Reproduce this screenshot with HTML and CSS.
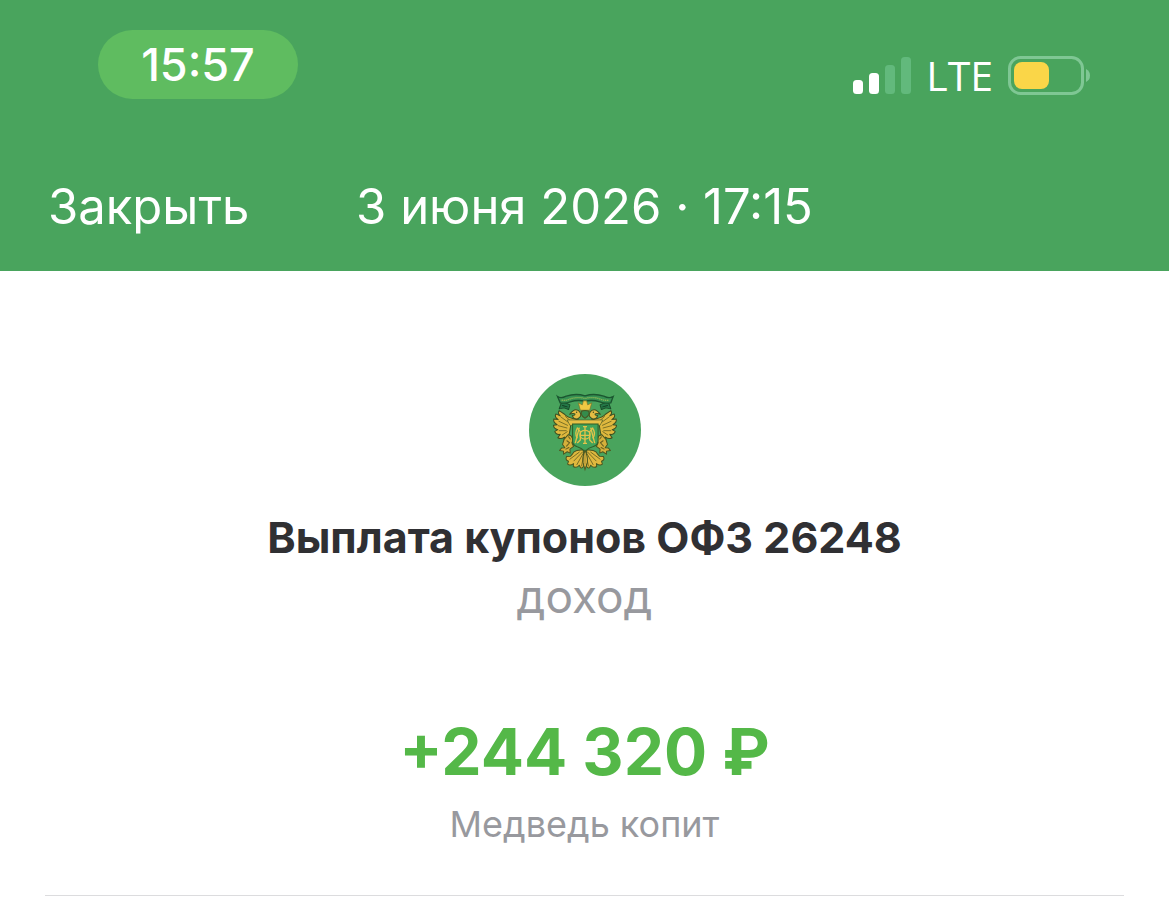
FILE: index.html
```html
<!DOCTYPE html>
<html lang="ru">
<head>
<meta charset="utf-8">
<meta name="viewport" content="width=device-width, initial-scale=1">
<title>Выплата купонов ОФЗ 26248</title>
<link rel="stylesheet" href="styles.css">
</head>
<body>
<header class="header">
  <div class="status">
    <time class="clock">15:57</time>
    <div class="indicators">
      <svg class="signal" viewBox="0 0 60 40" aria-hidden="true">
        <rect x="1" y="25" width="10" height="14" rx="3.5" fill="#fff"/>
        <rect x="17" y="18" width="10" height="21" rx="3.5" fill="#fff"/>
        <rect x="33" y="10" width="10" height="29" rx="3.5" fill="#62b97c"/>
        <rect x="49" y="2" width="10" height="37" rx="3.5" fill="#62b97c"/>
      </svg>
      <span class="network">LTE</span>
      <svg class="battery" viewBox="0 0 84 40" aria-hidden="true">
        <rect x="2.5" y="2.5" width="73" height="36" rx="11" fill="none" stroke="#7fc794" stroke-width="3"/>
        <rect x="7" y="7" width="35" height="27" rx="8" fill="#fad648"/>
        <path d="M79 14Q83 16 83 20.5T79 27Z" fill="#7fc794"/>
      </svg>
    </div>
  </div>
  <nav class="nav">
    <button class="close" type="button">Закрыть</button>
    <time class="date" datetime="2026-06-03T17:15">3 июня 2026 · 17:15</time>
  </nav>
</header>
<main class="operation">
  <svg class="emblem" viewBox="28 27 334 334" role="img" aria-label="Герб">
    <defs>
      <g id="side" stroke-linejoin="round" stroke-linecap="round">
        <path d="M181 167C166 158 146 162 134 147L118 136Q112 144 121 152L108 146Q103 154 115 163L102 161Q99 171 112 178L101 180Q101 190 114 193L105 198Q108 209 121 207L114 217Q123 223 134 215L132 227L143 221L149 201L153 176L181 177Z" fill="#dfb83e" stroke="#3d4e20" stroke-width="3"/>
        <path d="M123 155L145 171M117 168L143 180M115 181L141 188M118 196L139 196M127 209L142 199M137 154L153 168" fill="none" stroke="#6b6420" stroke-width="2.5"/>
        <path d="M160 157Q170 165 178 157Q186 151 180 141Q175 132 164 134Q156 138 149 147Q160 143 165 146Q166 151 157 151Z" fill="#e3bc43" stroke="#3d4e20" stroke-width="3"/>
        <circle cx="170" cy="141" r="2" fill="#374b20"/>
        <path d="M145 208L133 221L128 237L135 247L125 248L119 255L131 257L131 266L142 259L151 263L150 251L161 243L156 232L160 222L153 211Z" fill="#d4b03b" stroke="#4a5620" stroke-width="3"/>
        <path d="M141 226L149 232L140 242M151 221L146 214M147 246L138 251" fill="none" stroke="#665f20" stroke-width="3"/>
        <path d="M190 254C178 252 161 256 158 265L152 272L140 273Q135 284 146 287L143 296Q151 302 161 294L160 303Q170 309 178 299L182 307Q188 309 191 300Z" fill="#dfb83e" stroke="#4a5620" stroke-width="3"/>
        <path d="M187 260L162 286M189 265L171 297M191 269L185 301M178 260L150 281" fill="none" stroke="#645e20" stroke-width="2.5"/>
        <path d="M115 96L124 114L118 131L133 128L146 133L150 119L137 113" fill="#247847" stroke="#194c29" stroke-width="3"/>
        <path d="M128 121L142 125" stroke="#123f22" stroke-width="3"/>
      </g>
    </defs>
    <circle cx="195" cy="194" r="167" fill="#49a45d"/>
    <use href="#side"/>
    <use href="#side" transform="translate(390 0) scale(-1 1)"/>
    <path d="M113 94Q123 101 139 93Q167 84 195 92Q223 84 251 93Q267 101 279 94L272 113Q253 116 239 110Q217 103 195 108Q173 103 151 110Q137 116 121 113Z" fill="#369052" stroke="#1b5630" stroke-width="4"/>
    <path d="M125 105Q140 107 151 101Q174 94 195 100Q217 94 239 101Q252 107 267 105" fill="none" stroke="#8cb655" stroke-width="4" stroke-dasharray="4 2"/>
    <path d="M181 135L175 113L187 119L190 107H200L203 119L215 113L209 135Z" fill="#f0c943" stroke="#75702a" stroke-width="2"/>
    <path d="M184 138Q195 133 207 138V147Q203 155 195 159Q187 155 184 147Z" fill="#348c4c" stroke="#4a5620" stroke-width="3"/>
    <path d="M142 164H248L240 180H150Z" fill="#e8c147" stroke="#536026" stroke-width="2"/>
    <path d="M158 176H234V226Q234 239 218 244Q205 247 195 258Q184 247 172 244Q157 239 158 226Z" fill="#41a35a" stroke="#315c27" stroke-width="3"/>
    <g fill="none" stroke="#e3c34a" stroke-width="4">
      <path d="M195 184V234M189 184H201M189 234H201M171 187L181 199V224L172 233M219 187L209 199V224L218 233M178 187L166 233M212 187L224 233M181 210H209"/>
      <ellipse cx="195" cy="208" rx="15" ry="13"/>
      <path d="M173 188Q163 203 172 219M217 188Q229 203 218 219"/>
    </g>
    <path d="M195 255Q187 272 189 291L195 312L202 291Q204 272 195 255Z" fill="#e7bd41" stroke="#4a5620" stroke-width="3"/>
    <path d="M195 264V297" stroke="#75692a" stroke-width="2"/>
  </svg>
  <h1 class="title">Выплата купонов ОФЗ 26248</h1>
  <p class="category">доход</p>
  <p class="amount">+244 320 ₽</p>
  <p class="account">Медведь копит</p>
  <hr class="divider">
</main>
</body>
</html>
```
FILE: styles.css
```css
* {
  box-sizing: border-box;
}

body {
  margin: 0;
  background: #fff;
  color: #303033;
  font-family: Inter, "Liberation Sans", sans-serif;
}

.header {
  padding: 30px 48px 32px;
  background: #49a45d;
  color: #fff;
}

.status {
  display: flex;
  align-items: flex-start;
  justify-content: space-between;
  padding: 0 30px 0 50px;
}

.clock {
  width: 200px;
  border-radius: 36px;
  background: #5fbc60;
  font-size: 45px;
  font-weight: 500;
  line-height: 69px;
  text-align: center;
}

.indicators {
  display: flex;
  align-items: center;
  gap: 14px;
  padding-top: 23px;
}

.signal {
  width: 60px;
  height: 40px;
}

.network {
  font-family: "Open Sans", "Noto Sans", sans-serif;
  font-size: 41px;
  font-weight: 500;
  line-height: 44px;
}

.battery {
  width: 84px;
  height: 40px;
}

.nav {
  display: grid;
  grid-template-columns: 1fr auto 1fr;
  align-items: center;
  padding-top: 76px;
}

.close {
  justify-self: start;
  padding: 0;
  border: 0;
  background: none;
  color: inherit;
  font: inherit;
  font-size: 49px;
  line-height: 64px;
}

.date {
  font-size: 49px;
  line-height: 64px;
}

.operation {
  display: flex;
  flex-direction: column;
  align-items: center;
  padding: 103px 45px 0;
  text-align: center;
}

.emblem {
  width: 112px;
  height: 112px;
}

.title {
  margin: 24px 0 0;
  font-size: 43px;
  font-weight: 700;
  line-height: 54px;
}

.category {
  margin: 4px 0 0;
  color: #98999e;
  font-size: 46px;
  line-height: 56px;
}

.amount {
  margin: 88px 0 0;
  color: #54b848;
  font-size: 64px;
  font-weight: 700;
  line-height: 80px;
}

.account {
  margin: 10px 0 0;
  color: #98999e;
  font-size: 36px;
  line-height: 44px;
}

.divider {
  width: 100%;
  margin: 49px 0 0;
  border: 0;
  border-top: 1px solid #dcdcde;
}
```
